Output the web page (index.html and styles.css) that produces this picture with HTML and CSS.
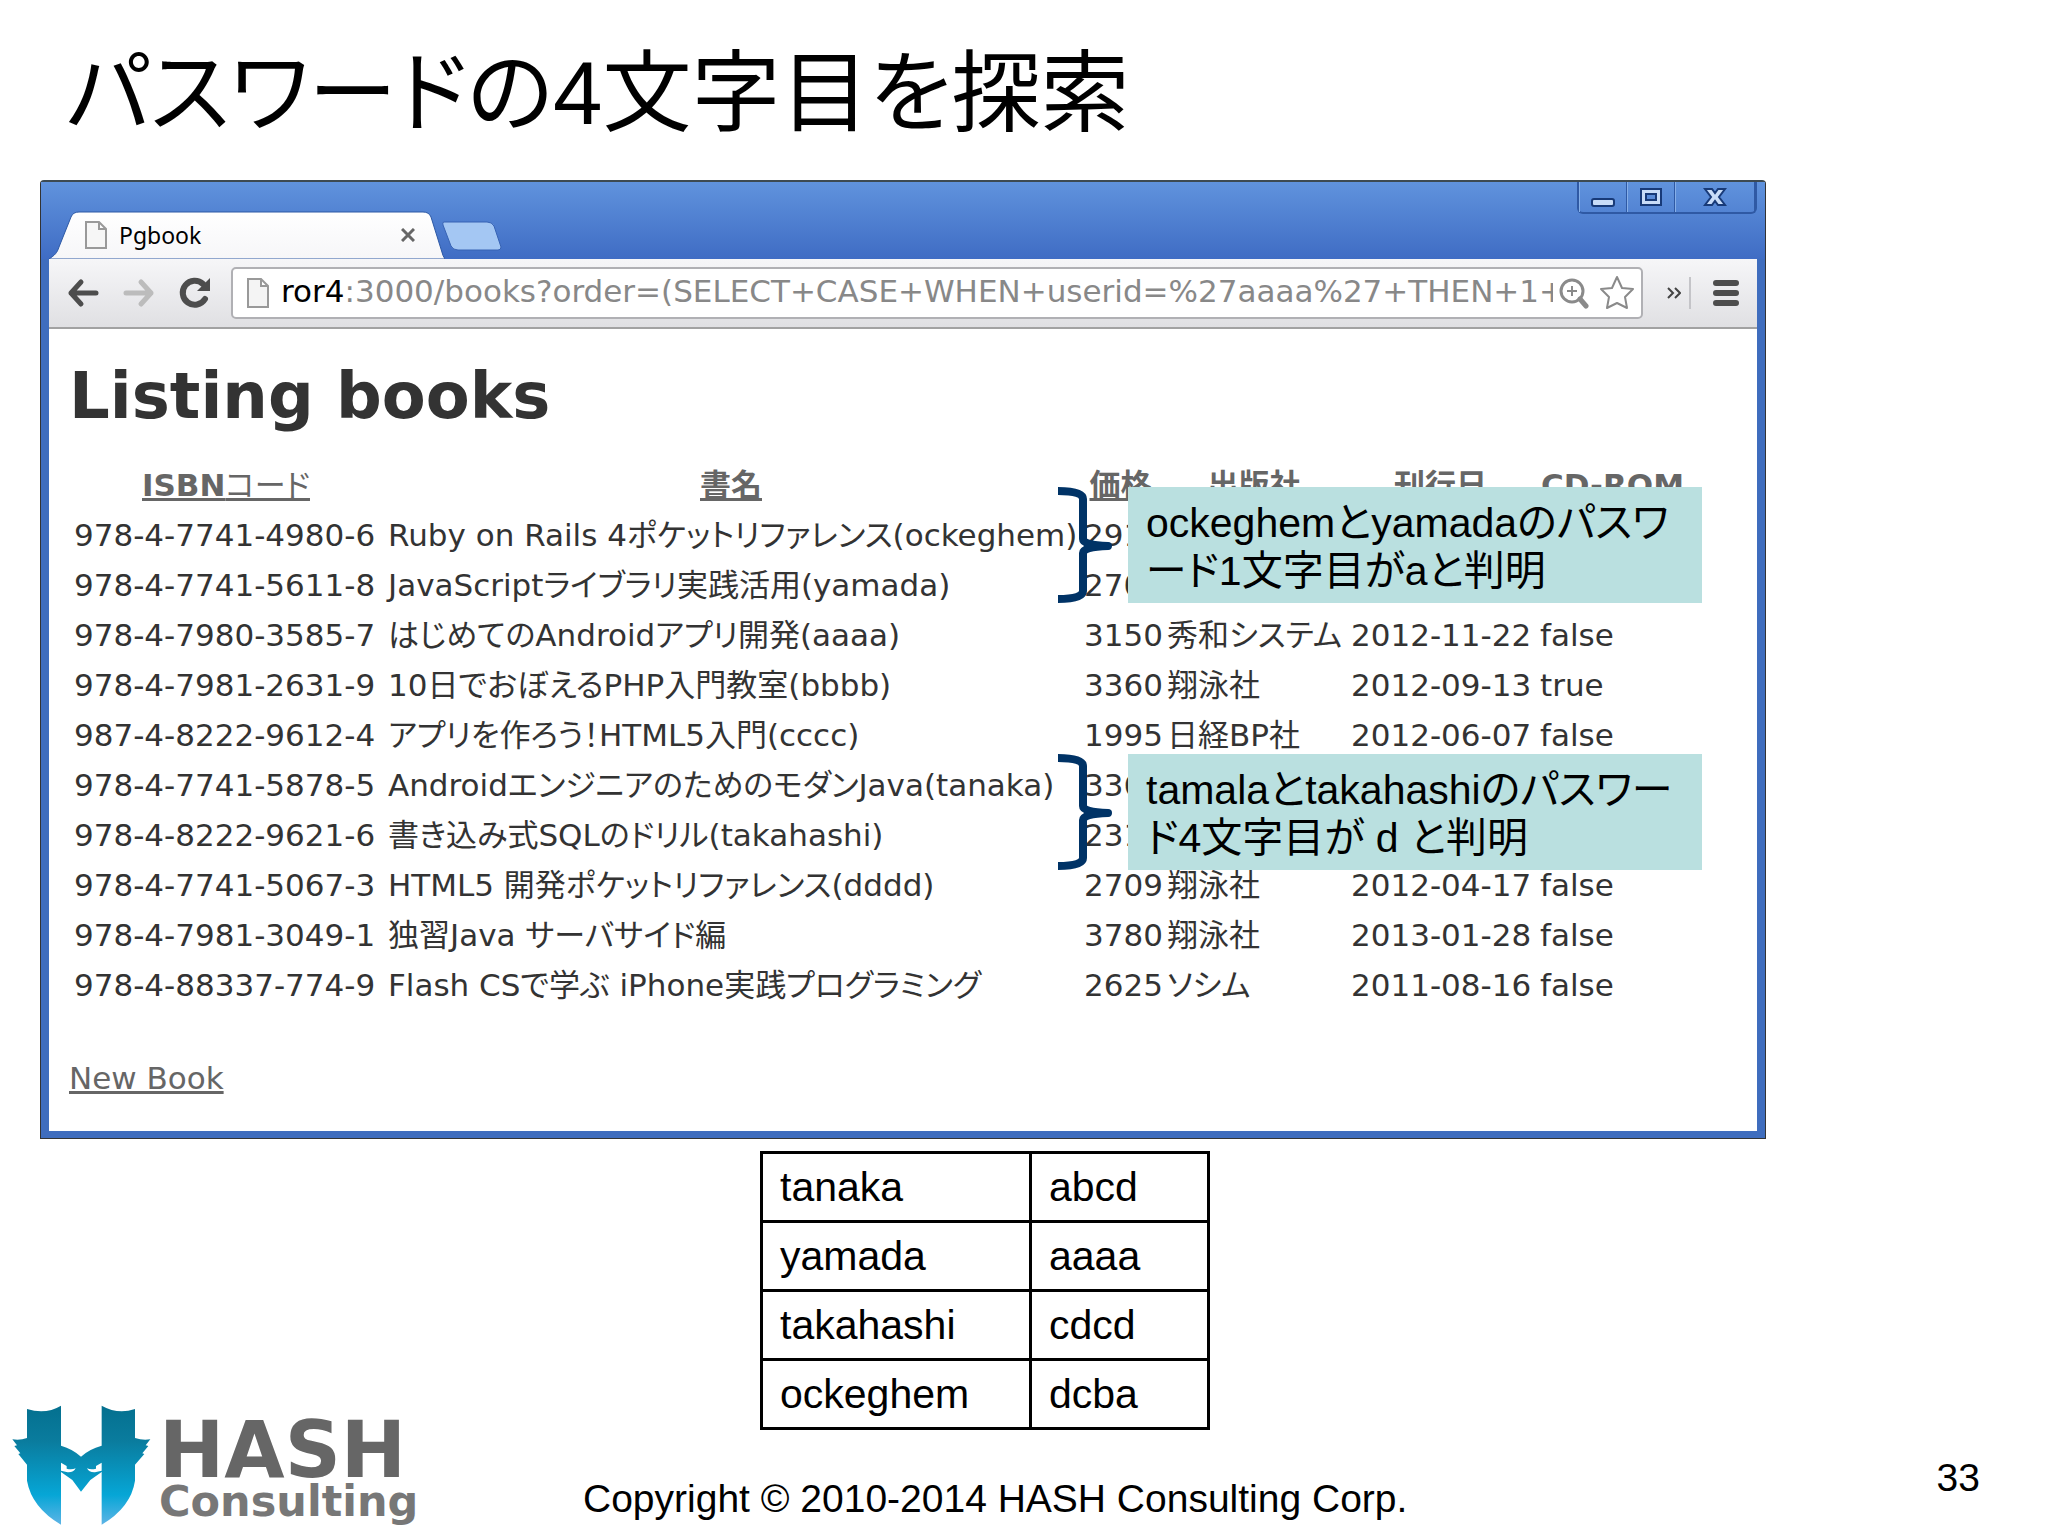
FILE: index.html
```html
<!DOCTYPE html>
<html lang="ja">
<head>
<meta charset="utf-8">
<title>パスワードの4文字目を探索</title>
<link rel="stylesheet" href="styles.css">
</head>
<body>
<h1 class="slide-title">パスワードの4文字目を探索</h1>

<main>
<section class="browser">
	<div class="titlebar">
		<div class="tab">
			<svg class="tab-shape" viewBox="0 0 396 48" preserveAspectRatio="none">
				<defs>
					<linearGradient id="tab-fill" x1="0" y1="0" x2="0" y2="1">
						<stop offset="0" stop-color="#fff"/>
						<stop offset="1" stop-color="#f6f6f8"/>
					</linearGradient>
				</defs>
				<path d="M0 48 C6 44 8 42 10 36 L22 6 Q24 1 30 1 H374 Q380 1 382 6 L392 38 Q394 46 396 48 Z" fill="url(#tab-fill)" stroke="#2d59a5" stroke-width="1"/>
			</svg>
			<svg class="page-icon" width="22" height="28" viewBox="0 0 22 28"><path d="M1 1 H14 L21 8 V27 H1 Z M14 1 V8 H21" fill="#f6f6f6" stroke="#999" stroke-width="2"/></svg>
			<span class="tab-name">Pgbook</span>
			<button class="tab-close" aria-label="Close tab"><svg width="14" height="14" viewBox="0 0 14 14"><path d="M1 1 L13 13 M13 1 L1 13" stroke="#666" stroke-width="3"/></svg></button>
		</div>
		<button class="new-tab" aria-label="New tab"><svg width="62" height="30" viewBox="0 0 62 30"><path d="M3 1 H46 Q51 1 53 5 L60 26 Q60 29 57 29 H17 Q12 29 10 25 L2 4 Q1 1 3 1 Z" fill="#a4c7f3" stroke="#3763b4"/></svg></button>
		<div class="window-buttons">
			<button class="win-min" aria-label="Minimize"><svg width="24" height="24" viewBox="0 0 24 24"><rect x="1" y="14" width="22" height="7" rx="2" fill="#c8dcf8" stroke="#183a78" stroke-width="2"/></svg></button>
			<button class="win-max" aria-label="Maximize"><svg width="24" height="24" viewBox="0 0 24 24"><path d="M2 4 H22 V20 H2 Z M7 9 V15 H17 V9 Z" fill="#c8dcf8" fill-rule="evenodd" stroke="#183a78" stroke-width="2"/></svg></button>
			<button class="win-close" aria-label="Close"><svg width="24" height="24" viewBox="0 0 24 24"><path d="M2 4 H9 L12 8 L15 4 H22 L16 12 L22 20 H15 L12 16 L9 20 H2 L8 12 Z" fill="#c8dcf8" stroke="#183a78" stroke-width="2"/></svg></button>
		</div>
	</div>

	<div class="toolbar">
		<button aria-label="Back"><svg width="32" height="32" viewBox="0 0 32 32"><path d="M14 5 L4 16 L14 27 M4 16 H29" fill="none" stroke="#4d4d4d" stroke-width="5" stroke-linejoin="round" stroke-linecap="round"/></svg></button>
		<button aria-label="Forward"><svg width="32" height="32" viewBox="0 0 32 32"><path d="M18 5 L28 16 L18 27 M28 16 H3" fill="none" stroke="#bcbcbc" stroke-width="5" stroke-linejoin="round" stroke-linecap="round"/></svg></button>
		<button aria-label="Reload"><svg width="32" height="32" viewBox="0 0 32 32"><path d="M26 22 A12 12 0 1 1 24 7" fill="none" stroke="#4d4d4d" stroke-width="6" stroke-linecap="round"/><path d="M31 1 V14 H18 Z" fill="#4d4d4d"/></svg></button>
		<div class="address">
			<svg class="page-icon" width="22" height="30" viewBox="0 0 22 30"><path d="M1 1 H14 L21 8 V29 H1 Z M14 1 V8 H21" fill="#f4f4f4" stroke="#999" stroke-width="2"/></svg>
			<label for="url">ror4</label>
			<input type="text" id="url" value=":3000/books?order=(SELECT+CASE+WHEN+userid=%27aaaa%27+THEN+1+">
			<svg width="30" height="32" viewBox="0 0 30 32"><circle cx="13" cy="14" r="11" fill="none" stroke="#8a8a8a" stroke-width="3"/><path d="M8 14 H18 M13 9 V19" stroke="#8a8a8a" stroke-width="2"/><path d="M21 22 L27 29" stroke="#8a8a8a" stroke-width="5" stroke-linecap="round"/></svg>
			<svg class="star" width="36" height="36" viewBox="0 0 36 36"><path d="M18 2 L23 13 L34 14 L26 22 L28 33 L18 28 L8 33 L10 22 L2 14 L13 13 Z" fill="#fff" stroke="#8a8a8a" stroke-width="2" stroke-linejoin="round"/></svg>
		</div>
		<button class="more" aria-label="More"><svg width="14" height="12" viewBox="0 0 14 12"><path d="M1 1 L6 6 L1 11 M8 1 L13 6 L8 11" fill="none" stroke="#444" stroke-width="2"/></svg></button>
		<button class="menu" aria-label="Menu"><svg width="26" height="26" viewBox="0 0 26 26"><path d="M3 3 H23 M3 13 H23 M3 23 H23" stroke="#4d4d4d" stroke-width="6" stroke-linecap="round"/></svg></button>
	</div>

	<div class="page">
		<h2>Listing books</h2>
		<table class="books">
			<colgroup>
				<col class="col-isbn"><col class="col-name"><col class="col-price"><col class="col-publisher"><col class="col-date"><col class="col-cd">
			</colgroup>
			<thead>
				<tr>
					<th><a href="#">ISBN<span class="kana">コード</span></a></th>
					<th><a href="#">書名</a></th>
					<th><a href="#">価格</a></th>
					<th><a href="#">出版社</a></th>
					<th><a href="#">刊行日</a></th>
					<th><a href="#">CD-ROM</a></th>
				</tr>
			</thead>
			<tbody>
				<tr><td>978-4-7741-4980-6</td><td>Ruby on Rails 4ポケットリファレンス(ockeghem)</td><td>291</td><td></td><td></td><td></td></tr>
				<tr><td>978-4-7741-5611-8</td><td>JavaScriptライブラリ実践活用(yamada)</td><td>270</td><td></td><td></td><td></td></tr>
				<tr><td>978-4-7980-3585-7</td><td>はじめてのAndroidアプリ開発(aaaa)</td><td>3150</td><td>秀和システム</td><td>2012-11-22</td><td>false</td></tr>
				<tr><td>978-4-7981-2631-9</td><td>10日でおぼえるPHP入門教室(bbbb)</td><td>3360</td><td>翔泳社</td><td>2012-09-13</td><td>true</td></tr>
				<tr><td>987-4-8222-9612-4</td><td>アプリを作ろう！HTML5入門(cccc)</td><td>1995</td><td>日経BP社</td><td>2012-06-07</td><td>false</td></tr>
				<tr><td>978-4-7741-5878-5</td><td>AndroidエンジニアのためのモダンJava(tanaka)</td><td>336</td><td></td><td></td><td></td></tr>
				<tr><td>978-4-8222-9621-6</td><td>書き込み式SQLのドリル(takahashi)</td><td>231</td><td></td><td></td><td></td></tr>
				<tr><td>978-4-7741-5067-3</td><td>HTML5 開発ポケットリファレンス(dddd)</td><td>2709</td><td>翔泳社</td><td>2012-04-17</td><td>false</td></tr>
				<tr><td>978-4-7981-3049-1</td><td>独習Java サーバサイド編</td><td>3780</td><td>翔泳社</td><td>2013-01-28</td><td>false</td></tr>
				<tr><td>978-4-88337-774-9</td><td>Flash CSで学ぶ iPhone実践プログラミング</td><td>2625</td><td>ソシム</td><td>2011-08-16</td><td>false</td></tr>
			</tbody>
		</table>
		<a class="new-book" href="#">New Book</a>

		<div class="note note-first">
			<svg class="brace" width="54" height="116" viewBox="0 0 54 116"><path d="M0 4 Q25 4 25 12 V52 Q25 58 50 59 Q25 60 25 66 V104 Q25 112 0 112" fill="none" stroke="#036" stroke-width="8" stroke-linejoin="round"/></svg>
			<p>ockeghemとyamadaのパスワ<br>ード1文字目がaと判明</p>
		</div>
		<div class="note note-second">
			<svg class="brace" width="54" height="116" viewBox="0 0 54 116"><path d="M0 4 Q25 4 25 12 V52 Q25 58 50 59 Q25 60 25 66 V104 Q25 112 0 112" fill="none" stroke="#036" stroke-width="8" stroke-linejoin="round"/></svg>
			<p>tamalaとtakahashiのパスワー<br>ド4文字目が d と判明</p>
		</div>
	</div>
</section>

<table class="passwords">
	<tr><td>tanaka</td><td>abcd</td></tr>
	<tr><td>yamada</td><td>aaaa</td></tr>
	<tr><td>takahashi</td><td>cdcd</td></tr>
	<tr><td>ockeghem</td><td>dcba</td></tr>
</table>
</main>

<footer>
	<div class="logo">
		<svg width="140" height="122" viewBox="30 40 420 366">
			<defs>
				<linearGradient id="owl" x1="0" y1="0" x2="0" y2="1">
					<stop offset="0" stop-color="#04708f"/>
					<stop offset=".3" stop-color="#0a7c9e"/>
					<stop offset=".75" stop-color="#06a6d6"/>
					<stop offset="1" stop-color="#5eb4e6"/>
				</linearGradient>
			</defs>
			<path fill="url(#owl)" d="M78 55 Q135 72 180 45 V165 Q215 175 240 198 Q265 175 302 165 V45 Q350 72 402 55 V142 Q425 150 448 146 L434 164 L442 166 L424 188 L430 190 L402 222 V270 Q390 350 302 402 V244 L268 268 L240 303 L214 268 L180 244 V402 Q92 350 78 270 V222 L52 190 L58 188 L40 166 L48 164 L34 146 Q57 150 78 142 Z"/>
			<path fill="#fff" d="M180 216 L197 226 V234 Q212 238 224 233 Q218 246 200 245 L180 240 Z M302 216 L285 226 V234 Q270 238 258 233 Q264 246 282 245 L302 240 Z"/>
		</svg>
		<div class="logo-text">
			<span class="logo-hash">HASH</span>
			<span class="logo-consulting">Consulting</span>
		</div>
	</div>
	<p class="copyright">Copyright © 2010-2014 HASH Consulting Corp.</p>
	<p class="page-number">33</p>
</footer>
</body>
</html>
```

FILE: styles.css
```css
* {
	box-sizing: border-box;
}

body {
	margin: 0;
	background: #fff;
	color: #000;
	font-family: "Liberation Sans", "Noto Sans CJK JP", sans-serif;
}

button {
	display: flex;
	align-items: center;
	justify-content: center;
	padding: 0;
	border: none;
	background: none;
	cursor: pointer;
}

.slide-title {
	margin: 0;
	padding: 33px 66px 27px;
	font-size: 89px;
	line-height: 120px;
	font-weight: normal;
	font-feature-settings: "palt";
}

/* browser window */
.browser {
	width: 84%;
	min-width: 1726px;
	margin-left: 40px;
	padding: 0 8px 7px;
	background: #3f6dbe;
	border: 1px solid #333;
	border-top: 2px solid #3d4a52;
	border-radius: 4px 4px 0 0;
}

.titlebar {
	display: flex;
	align-items: flex-end;
	height: 77px;
	margin: 0 -8px;
	padding: 0 8px;
	background: linear-gradient(#6093dd, #3f6cc4);
}

.tab {
	position: relative;
	display: flex;
	align-items: center;
	width: 396px;
	height: 48px;
	padding: 0 30px 0 36px;
}

.tab-shape {
	position: absolute;
	left: 0;
	top: 0;
	width: 100%;
	height: 100%;
}

.tab .page-icon,
.tab-name,
.tab-close {
	position: relative;
}

.tab-name {
	flex: 1;
	margin-left: 12px;
	font-family: "Noto Sans", sans-serif;
	font-size: 23px;
}

.new-tab {
	margin: 0 0 8px -4px;
}

.window-buttons {
	display: flex;
	align-self: flex-start;
	margin-left: auto;
	border: 2px solid #2f59a4;
	border-top: none;
	border-radius: 0 0 6px 6px;
}

.window-buttons button {
	width: 48px;
	height: 30px;
	border-left: 1px solid #86afe8;
	border-right: 1px solid #2f59a4;
}

.window-buttons .win-close {
	width: 80px;
}

.toolbar {
	display: flex;
	align-items: center;
	gap: 24px;
	height: 70px;
	padding: 0 18px;
	background: linear-gradient(#f6f6f8, #e0e0e3);
	border-bottom: 2px solid #a2a2a2;
}

.address {
	flex: 1;
	display: flex;
	align-items: center;
	height: 52px;
	margin-left: -4px;
	padding: 0 6px 0 14px;
	background: #fff;
	border: 2px solid #b0b0b4;
	border-radius: 5px;
	font-family: "DejaVu Sans", sans-serif;
	font-size: 31px;
	line-height: 40px;
}

.address label {
	margin-left: 12px;
	padding-bottom: 4px;
}

.address input {
	flex: 1;
	min-width: 0;
	margin-right: 6px;
	padding: 0 0 4px;
	border: none;
	outline: none;
	background: none;
	color: #888;
	font: inherit;
}

.address .star {
	margin-left: 10px;
}

.menu {
	height: 32px;
	margin-left: -16px;
	padding-left: 22px;
	border-left: 2px solid #c4c4c8;
}

/* page inside the browser */
.page {
	position: relative;
	padding: 27px 20px 33px;
	background: #fff;
	color: #333;
	font-family: "DejaVu Sans", "Noto Sans CJK JP", sans-serif;
	font-size: 31px;
	line-height: 40px;
	font-feature-settings: "palt";
}

.page h2 {
	margin: 0 0 24px;
	font-size: 64px;
	line-height: 80px;
}

.page a {
	color: #666;
}

.books {
	table-layout: fixed;
	width: 1621px;
	margin-bottom: 48px;
	border-collapse: collapse;
}

.books th,
.books td {
	height: 50px;
	padding: 0 5px;
	white-space: nowrap;
	text-align: left;
}

.books th {
	padding: 0;
	text-align: center;
}

.books .kana {
	font-weight: normal;
}

.col-isbn { width: 314px; }
.col-name { width: 696px; }
.col-price { width: 83px; }
.col-publisher { width: 184px; }
.col-date { width: 189px; }
.col-cd { width: 155px; }

/* callouts over the list */
.note {
	position: absolute;
	left: 1009px;
	display: flex;
	gap: 16px;
}

.note-first {
	top: 158px;
}

.note-second {
	top: 425px;
}

.note p {
	width: 574px;
	margin: 0;
	padding: 12px 18px 8px;
	background: #bae0e0;
	color: #000;
	font-family: "Liberation Sans", "Noto Sans CJK JP", sans-serif;
	font-size: 41px;
	line-height: 48px;
	white-space: nowrap;
}

.passwords {
	margin: 12px 0 0 760px;
	border-collapse: collapse;
	font-size: 41px;
}

.passwords td {
	width: 178px;
	height: 69px;
	padding: 0 17px;
	border: 3px solid #000;
}

.passwords td:first-child {
	width: 269px;
}

footer {
	display: flex;
	align-items: flex-start;
	padding: 0 68px 0 11px;
	font-size: 39px;
	line-height: 48px;
}

footer p {
	margin: 0;
}

.logo {
	display: flex;
	margin-top: -26px;
}

.logo-text {
	display: flex;
	flex-direction: column;
	width: 262px;
	margin: 17px 0 0 8px;
	color: #666;
	font-family: "DejaVu Sans", sans-serif;
	font-weight: bold;
}

.logo-hash {
	font-size: 78px;
	line-height: 58px;
}

.logo-consulting {
	color: #777;
	font-size: 43px;
	line-height: 44px;
}

.copyright {
	padding: 45px 0 0 162px;
}

footer .page-number {
	margin-left: auto;
	padding-top: 24px;
}
```
